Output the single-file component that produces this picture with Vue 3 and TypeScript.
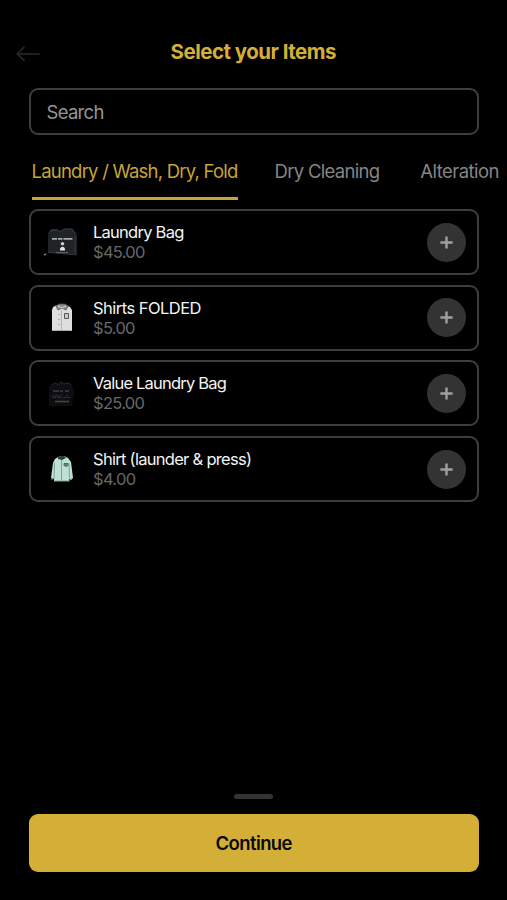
<script setup lang="ts">
import { ref } from 'vue'

type Art = 'bag' | 'folded' | 'value' | 'pressed'
interface Item {
  name: string
  price: string
  art: Art
  spacing: string
}

const tabs = ['Laundry / Wash, Dry, Fold', 'Dry Cleaning', 'Alteration']
const active = ref(0)
const search = ref('')
const items: Item[] = [
  { name: 'Laundry Bag', price: '$45.00', art: 'bag', spacing: '-0.75px' },
  { name: 'Shirts FOLDED', price: '$5.00', art: 'folded', spacing: '-0.53px' },
  { name: 'Value Laundry Bag', price: '$25.00', art: 'value', spacing: '-0.79px' },
  { name: 'Shirt (launder & press)', price: '$4.00', art: 'pressed', spacing: '-0.71px' },
]
</script>

<template>
  <main class="screen">
    <header class="header">
      <button class="back" aria-label="Back">
        <svg width="24" height="16" viewBox="0 0 24 16">
          <path d="M8 1.2 1.3 7.8 8 14.4M1.5 7.8H23" />
        </svg>
      </button>
      <h1>Select your Items</h1>
    </header>

    <input v-model="search" class="search" type="text" placeholder="Search" />

    <nav class="tabs">
      <button
        v-for="(tab, i) in tabs"
        :key="tab"
        class="tab"
        :class="{ active: active === i }"
        @click="active = i"
      >{{ tab }}</button>
    </nav>

    <ul class="items">
      <li v-for="item in items" :key="item.name" class="card">
        <svg v-if="item.art === 'bag'" class="art" width="40" height="40" viewBox="0 0 40 40">
          <path d="m6 10 2-3h6l3 2 4-2h8l3 3 2 2v20l-4 1-25-2V12Z" fill="#202325" />
          <path d="m6 11 3-3h6l2 2 4-3h8l3 4" fill="none" stroke="#3b3f41" stroke-width="1" />
          <path d="m4 31-3 2.2M5 30l29 3M32 14v18" fill="none" stroke="#3a3c3d" stroke-width=".8" />
          <path d="M1 33.2 3 32" stroke="#8b8d8e" stroke-width="1.2" />
          <path d="M9 16.8h5m1 0h4.500m1 0h9" stroke="#a6a9aa" stroke-width="1.8" />
          <circle cx="19.500" cy="21.800" r="1.800" fill="#c9cccd" />
          <path d="M17 28.500c-.5-5 5.500-5 5 0Z" fill="#e1e4e5" />
          <path d="M13 30.500h12" stroke="#686c6e" stroke-width=".8" />
        </svg>
        <svg v-else-if="item.art === 'folded'" class="art" width="40" height="40" viewBox="0 0 40 40">
          <path d="m10 9 4-2h9l4 2 2 3v21H9V12Z" fill="#dededf" />
          <path d="m13 8 3-2h6l3 2-2 4-4-2-4 2Z" fill="#8d8e90" stroke="#4d4e51" stroke-width=".8" />
          <path d="m15 8 4 2 4-2" fill="none" stroke="#d7d7d8" stroke-width="1" />
          <path d="M18.500 12v21" stroke="#a9aaac" stroke-width=".8" />
          <path d="M16 16v1m0 4v1m0 4v1" stroke="#77797b" stroke-width="1" />
          <path d="M21.500 15.500h4v5h-4Z" fill="#c8c9ca" stroke="#55575a" stroke-width="1" />
          <path d="M9.500 32.500h19" stroke="#a7a8a9" />
        </svg>
        <svg v-else-if="item.art === 'value'" class="art" width="40" height="40" viewBox="0 0 40 40">
          <path d="m6 13 4-3h5l3-2 3 2 5-1 4 5 1 5-2 14H6Z" fill="#0d0d14" />
          <path d="m9 12 3-2 4 2 2-3 3 2 5-1 2 2" fill="none" stroke="#24242b" stroke-width="1" />
          <path d="M10 18h6m1 0h3m2 0h4" stroke="#443d3e" stroke-width="1.6" />
          <path d="M10 21.500v3h3v-3m2 0v3h3v-3m2 3h3m1-3v3h3" fill="none" stroke="#36313a" />
          <path d="M12 28.500h14" stroke="#54402d" stroke-width="1.600" />
        </svg>
        <svg v-else class="art" width="40" height="40" viewBox="0 0 40 40">
          <path d="m15 8 3-1h3l4 2 3 4 2 16-2 2-2-1v2H11v-2l-3-1 2-15 2-4Z" fill="#bfe0d5" />
          <path d="m15 8 3-1h3l2 2-4 2-4-1Z" fill="#263f39" />
          <path d="M18.500 11v20M11.500 14 11 30M26 14l.5 15" fill="none" stroke="#6c9386" stroke-width=".8" />
          <path d="M21 14.500h4v2l-2 1-2-1Z" fill="#65897e" stroke="#395c52" stroke-width=".8" />
          <path d="M11 32h16M8 30h2m17 0h2" stroke="#7da194" />
        </svg>
        <div class="info">
          <span class="name" :style="{ letterSpacing: item.spacing }">{{ item.name }}</span>
          <span class="price">{{ item.price }}</span>
        </div>
        <button class="add" :aria-label="`Add ${item.name}`">
          <svg width="13" height="13" viewBox="0 0 13 13"><path d="M6.500.4v12.200M.4 6.500h12.200" /></svg>
        </button>
      </li>
    </ul>

    <footer class="footer">
      <div class="handle"></div>
      <button class="continue">Continue</button>
    </footer>
  </main>
</template>

<style>
body {
  background: #000;
}
</style>

<style scoped>
* {
  box-sizing: border-box;
}
button {
  padding: 0;
  border: 0;
  background: none;
  font: inherit;
  color: inherit;
}
.screen {
  display: flex;
  flex-direction: column;
  height: 900px;
  padding: 33px 28px 28px 28.5px;
  overflow: hidden;
  background: #000;
  font-family: Inter, 'Liberation Sans', sans-serif;
}
.header {
  display: grid;
  grid-template-columns: 24px 1fr 24px;
  align-items: center;
  height: 36px;
  margin: 0 -11.5px 0 -12.5px;
}
.back {
  height: 16px;
  margin-top: 5px;
}
.back svg {
  display: block;
}
.back path {
  fill: none;
  stroke: #242427;
  stroke-width: 1.8;
  stroke-linecap: round;
  stroke-linejoin: round;
}
h1 {
  margin: 0;
  padding-top: 1px;
  text-align: center;
  font-size: 20.5px;
  line-height: 26px;
  font-weight: 700;
  letter-spacing: -0.52px;
  color: #d4af37;
}
.search {
  flex: none;
  width: 100%;
  height: 47px;
  margin-top: 19px;
  padding: 0 16px;
  border: 2px solid #3e3e3e;
  border-radius: 9px;
  outline: none;
  background: #000;
  color: #fff;
  font-family: inherit;
  font-size: 18.5px;
  letter-spacing: -0.7px;
}
.search::placeholder {
  color: #969696;
  opacity: 1;
}
.tabs {
  display: flex;
  flex: none;
  gap: 37px;
  height: 65px;
  margin: 0 -28px 9px 3px;
}
.tab {
  flex: none;
  height: 65px;
  padding-bottom: 7px;
  padding-top: 17px;
  border-bottom: 3px solid transparent;
  font-size: 18.5px;
  line-height: 24px;
  letter-spacing: -0.78px;
  white-space: nowrap;
  color: #858585;
}
.tab:nth-child(2) {
  letter-spacing: -0.7px;
}
.tab:last-child {
  margin-left: 4px;
  letter-spacing: -0.55px;
}
.tab.active {
  border-color: #c7a536;
  color: #c7a536;
}
.items {
  display: flex;
  flex-direction: column;
  gap: 9.7px;
  margin: 0;
  padding: 0;
  list-style: none;
}
.card {
  display: flex;
  align-items: center;
  height: 66px;
  padding: 0 11px 0 12px;
  border: 2px solid #3e3e3e;
  border-radius: 9px;
}
.art {
  flex: none;
}
.info {
  display: flex;
  flex: 1;
  flex-direction: column;
  padding-left: 10.5px;
}
.name,
.price {
  font-size: 16.5px;
  line-height: 20px;
}
.name {
  color: #f4f4f4;
}
.price {
  letter-spacing: -0.7px;
  color: #67676b;
}
.add {
  display: grid;
  place-items: center;
  width: 39px;
  height: 39px;
  border-radius: 50%;
  background: #333;
}
.add path {
  fill: none;
  stroke: #a0a0a0;
  stroke-width: 2.4;
}
.footer {
  display: flex;
  flex-direction: column;
  align-items: center;
  margin-top: auto;
}
.handle {
  width: 39px;
  height: 5px;
  margin-bottom: 15px;
  border-radius: 3px;
  background: #333;
}
.continue {
  width: 100%;
  height: 58px;
  border-radius: 9px;
  background: #d4af37;
  color: #090805;
  font-size: 18.5px;
  font-weight: 600;
  letter-spacing: -0.6px;
}
</style>
